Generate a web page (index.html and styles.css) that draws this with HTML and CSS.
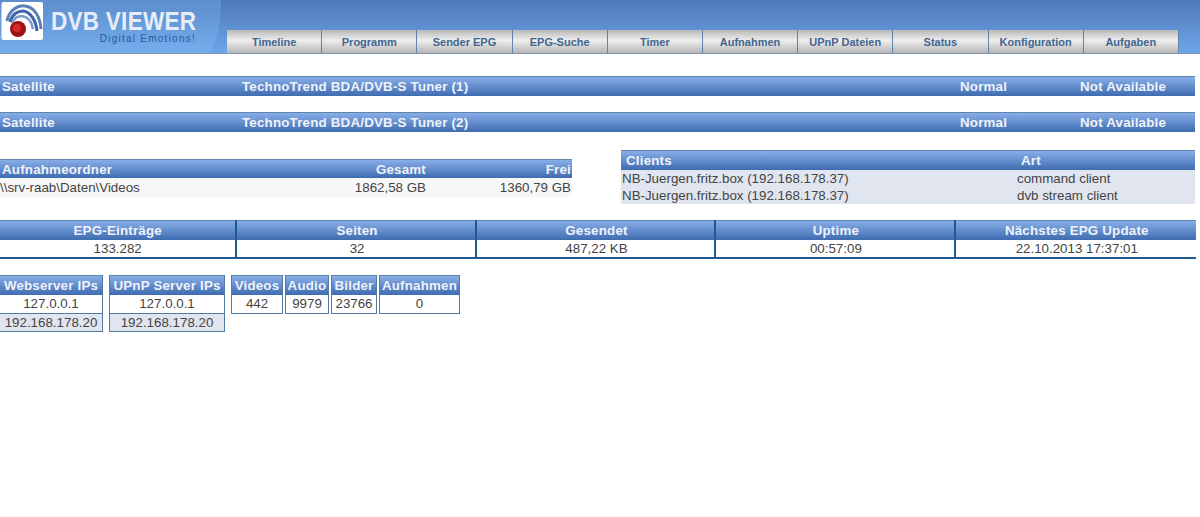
FILE: index.html
```html
<!DOCTYPE html>
<html lang="en">
  <head>
    <meta charset="UTF-8" />
    <meta name="viewport" content="width=device-width, initial-scale=1.0" />
    <title>DVB Viewer Status</title>
    <link rel="stylesheet" href="styles.css">
  </head>
  <body>
    <header class="top">
      <div class="brand">
        <svg class="logo-icon" width="44" height="40" viewBox="0 0 44 40">
          <rect x="1.500" y="1" width="41.500" height="38" rx="2" fill="#fff" />
          <path d="M7 20 C9 9 18 4 25 5 C34 6 40 15 41 28" fill="none" stroke="#5d7fb8" stroke-width="3" />
          <path d="M10 21 C12 13 18 10 23 10 C31 11 36 20 37 30" fill="none" stroke="#3f63a3" stroke-width="3" />
          <path d="M12 22 C14 17 18 15 22 15 C28 16 32 21 33 28" fill="none" stroke="#7d9bcb" stroke-width="2.6" />
          <circle cx="18" cy="28" r="8" fill="#9c1414" />
          <circle cx="17" cy="27" r="4" fill="#d42a2a" />
        </svg>
        <div class="brand-text">
          <span class="brand-name">DVB VIEWER</span>
          <span class="brand-sub">Digital Emotions!</span>
        </div>
      </div>
      <nav class="tabs">
        <a class="tab">Timeline</a>
        <a class="tab">Programm</a>
        <a class="tab">Sender EPG</a>
        <a class="tab">EPG-Suche</a>
        <a class="tab">Timer</a>
        <a class="tab">Aufnahmen</a>
        <a class="tab">UPnP Dateien</a>
        <a class="tab">Status</a>
        <a class="tab">Konfiguration</a>
        <a class="tab">Aufgaben</a>
      </nav>
    </header>

    <main class="content">
      <div class="tuner bar">
        <span class="t-type">Satellite</span>
        <span class="t-name">TechnoTrend BDA/DVB-S Tuner (1)</span>
        <span class="t-mode">Normal</span>
        <span class="t-state">Not Available</span>
      </div>
      <div class="tuner bar">
        <span class="t-type">Satellite</span>
        <span class="t-name">TechnoTrend BDA/DVB-S Tuner (2)</span>
        <span class="t-mode">Normal</span>
        <span class="t-state">Not Available</span>
      </div>

      <div class="middle">
        <div class="folders">
          <div class="folder-row bar">
            <span class="f-name">Aufnahmeordner</span>
            <span class="f-total">Gesamt</span>
            <span class="f-free">Frei</span>
          </div>
          <div class="folder-row folder-data">
            <span class="f-name">\\srv-raab\Daten\Videos</span>
            <span class="f-total">1862,58 GB</span>
            <span class="f-free">1360,79 GB</span>
          </div>
        </div>
        <div class="clients">
          <div class="client-row bar">
            <span class="c-name">Clients</span>
            <span class="c-kind">Art</span>
          </div>
          <div class="client-row client-data">
            <span class="c-name">NB-Juergen.fritz.box (192.168.178.37)</span>
            <span class="c-kind">command client</span>
          </div>
          <div class="client-row client-data">
            <span class="c-name">NB-Juergen.fritz.box (192.168.178.37)</span>
            <span class="c-kind">dvb stream client</span>
          </div>
        </div>
      </div>

      <div class="stats">
        <div class="stat"><div class="cell-head bar">EPG-Einträge</div><div class="cell">133.282</div></div>
        <div class="stat"><div class="cell-head bar">Seiten</div><div class="cell">32</div></div>
        <div class="stat"><div class="cell-head bar">Gesendet</div><div class="cell">487,22 KB</div></div>
        <div class="stat"><div class="cell-head bar">Uptime</div><div class="cell">00:57:09</div></div>
        <div class="stat"><div class="cell-head bar">Nächstes EPG Update</div><div class="cell">22.10.2013 17:37:01</div></div>
      </div>

      <div class="small-tables">
        <div class="box box-web">
          <div class="cell-head bar">Webserver IPs</div>
          <div class="cell">127.0.0.1</div>
          <div class="cell cell-alt">192.168.178.20</div>
        </div>
        <div class="box box-upnp">
          <div class="cell-head bar">UPnP Server IPs</div>
          <div class="cell">127.0.0.1</div>
          <div class="cell cell-alt">192.168.178.20</div>
        </div>
        <div class="media">
          <div class="box box-videos"><div class="cell-head bar">Videos</div><div class="cell">442</div></div>
          <div class="box box-audio"><div class="cell-head bar">Audio</div><div class="cell">9979</div></div>
          <div class="box box-bilder"><div class="cell-head bar">Bilder</div><div class="cell">23766</div></div>
          <div class="box box-rec"><div class="cell-head bar">Aufnahmen</div><div class="cell">0</div></div>
        </div>
      </div>
    </main>
  </body>
</html>
```

FILE: styles.css
```css
* {
  margin: 0;
  padding: 0;
  box-sizing: border-box;
}

body {
  font-family: "Liberation Sans", Arial, sans-serif;
  font-size: 13.33px;
  color: #444;
  background: #fff;
  overflow-x: hidden;
}

/* shared blue header look */
.bar {
  background: linear-gradient(to bottom, #88aee8, #3f6cb0);
  border-top: 1px solid #5f86a8;
  color: #eef2fa;
  font-weight: bold;
  letter-spacing: 0.2px;
}

.top {
  display: flex;
  height: 54px;
  background: linear-gradient(to bottom, #4f78b8, #6ea6ea);
  border-bottom: 1px solid #7f97b5;
}

.brand {
  width: 221px;
  display: flex;
  padding: 1px 0 0 0;
  gap: 7px;
  background: linear-gradient(to bottom, #5d8dcc, #74aeee);
  border-bottom-right-radius: 16px 54px;
}

.brand-text {
  width: 145px;
  display: flex;
  flex-direction: column;
  align-items: flex-end;
  padding-top: 8px;
}

.brand-name {
  align-self: flex-start;
  white-space: nowrap;
  font-size: 25px;
  font-weight: bold;
  color: #e6edf8;
  line-height: 24px;
  letter-spacing: 0.3px;
  transform: scaleX(0.9);
  transform-origin: left;
}

.brand-sub {
  font-size: 10px;
  color: #2a5a9a;
  letter-spacing: 1.25px;
  line-height: 11px;
  white-space: nowrap;
}

.tabs {
  display: flex;
  margin: 30px 0 0 6px;
  height: 23px;
}

.tab {
  width: 95.2px;
  display: flex;
  align-items: center;
  justify-content: center;
  padding-top: 1px;
  font-size: 11px;
  font-weight: bold;
  color: #41678f;
  background: linear-gradient(to bottom, #b8b8b8, #eeeeee 45%, #b6b6b6);
  border-right: 1px solid #5f86a8;
}

.content {
  display: flex;
  flex-direction: column;
}

.tuner {
  display: flex;
  width: 1195px;
  height: 20px;
  line-height: 20px;
  margin-top: 16px;
}

.tuner:first-child {
  margin-top: 22px;
}

.t-type {
  width: 242px;
  padding-left: 2px;
}

.t-name {
  width: 718px;
}

.t-mode {
  width: 120px;
}

.middle {
  display: flex;
  margin-top: 18px;
}

.folders {
  width: 572px;
  margin-top: 9px;
}

.folder-row {
  display: flex;
  height: 19px;
  line-height: 19px;
}

.folder-data {
  background: #f7f7f7;
}

.f-name {
  flex: 1;
  padding-left: 2px;
}

.folder-data .f-name {
  padding-left: 0;
}

.f-total {
  width: 146px;
  text-align: right;
}

.f-free {
  width: 146px;
  text-align: right;
  padding-right: 1px;
}

.clients {
  width: 574px;
  margin-left: 49px;
}

.client-row {
  display: flex;
  height: 17px;
  line-height: 17px;
}

.client-row.bar {
  height: 20px;
  line-height: 20px;
}

.client-data {
  background: #e1e5ef;
  padding-left: 1px;
}

.client-row.bar .c-name {
  padding-left: 5px;
  width: 400px;
}

.c-name {
  width: 395px;
}

.stats {
  display: flex;
  width: 1198px;
  margin: 16px 0 0 -2px;
  border-bottom: 2px solid #1f5a8c;
}

.stat {
  width: 239.400px;
  text-align: center;
  border-right: 2px solid #1f5a8c;
}

.stat:last-child {
  flex: 1;
  border-right: 0;
}

.stat .cell-head,
.stat .cell {
  padding-left: 2px;
}

.cell-head {
  height: 20px;
  line-height: 20px;
  text-align: center;
  white-space: nowrap;
}

.cell {
  height: 18px;
  line-height: 18px;
  text-align: center;
}

.stat .cell {
  height: 17px;
  line-height: 17px;
}

.small-tables {
  display: flex;
  align-items: flex-start;
  gap: 6px;
  margin-top: 16px;
}

.box {
  border: 1px solid #4f7ba5;
  border-top: 0;
}

.box .cell + .cell {
  border-top: 1px solid #4f7ba5;
}

.cell-alt {
  background: #e1e5ef;
}

.box-web {
  width: 103px;
  border-left: 0;
}

.box-upnp {
  width: 116px;
}

.media {
  display: flex;
  gap: 2px;
}

.box-videos {
  width: 52px;
}

.box-audio {
  width: 44px;
}

.box-bilder {
  width: 46px;
}

.box-rec {
  width: 81px;
}
```
